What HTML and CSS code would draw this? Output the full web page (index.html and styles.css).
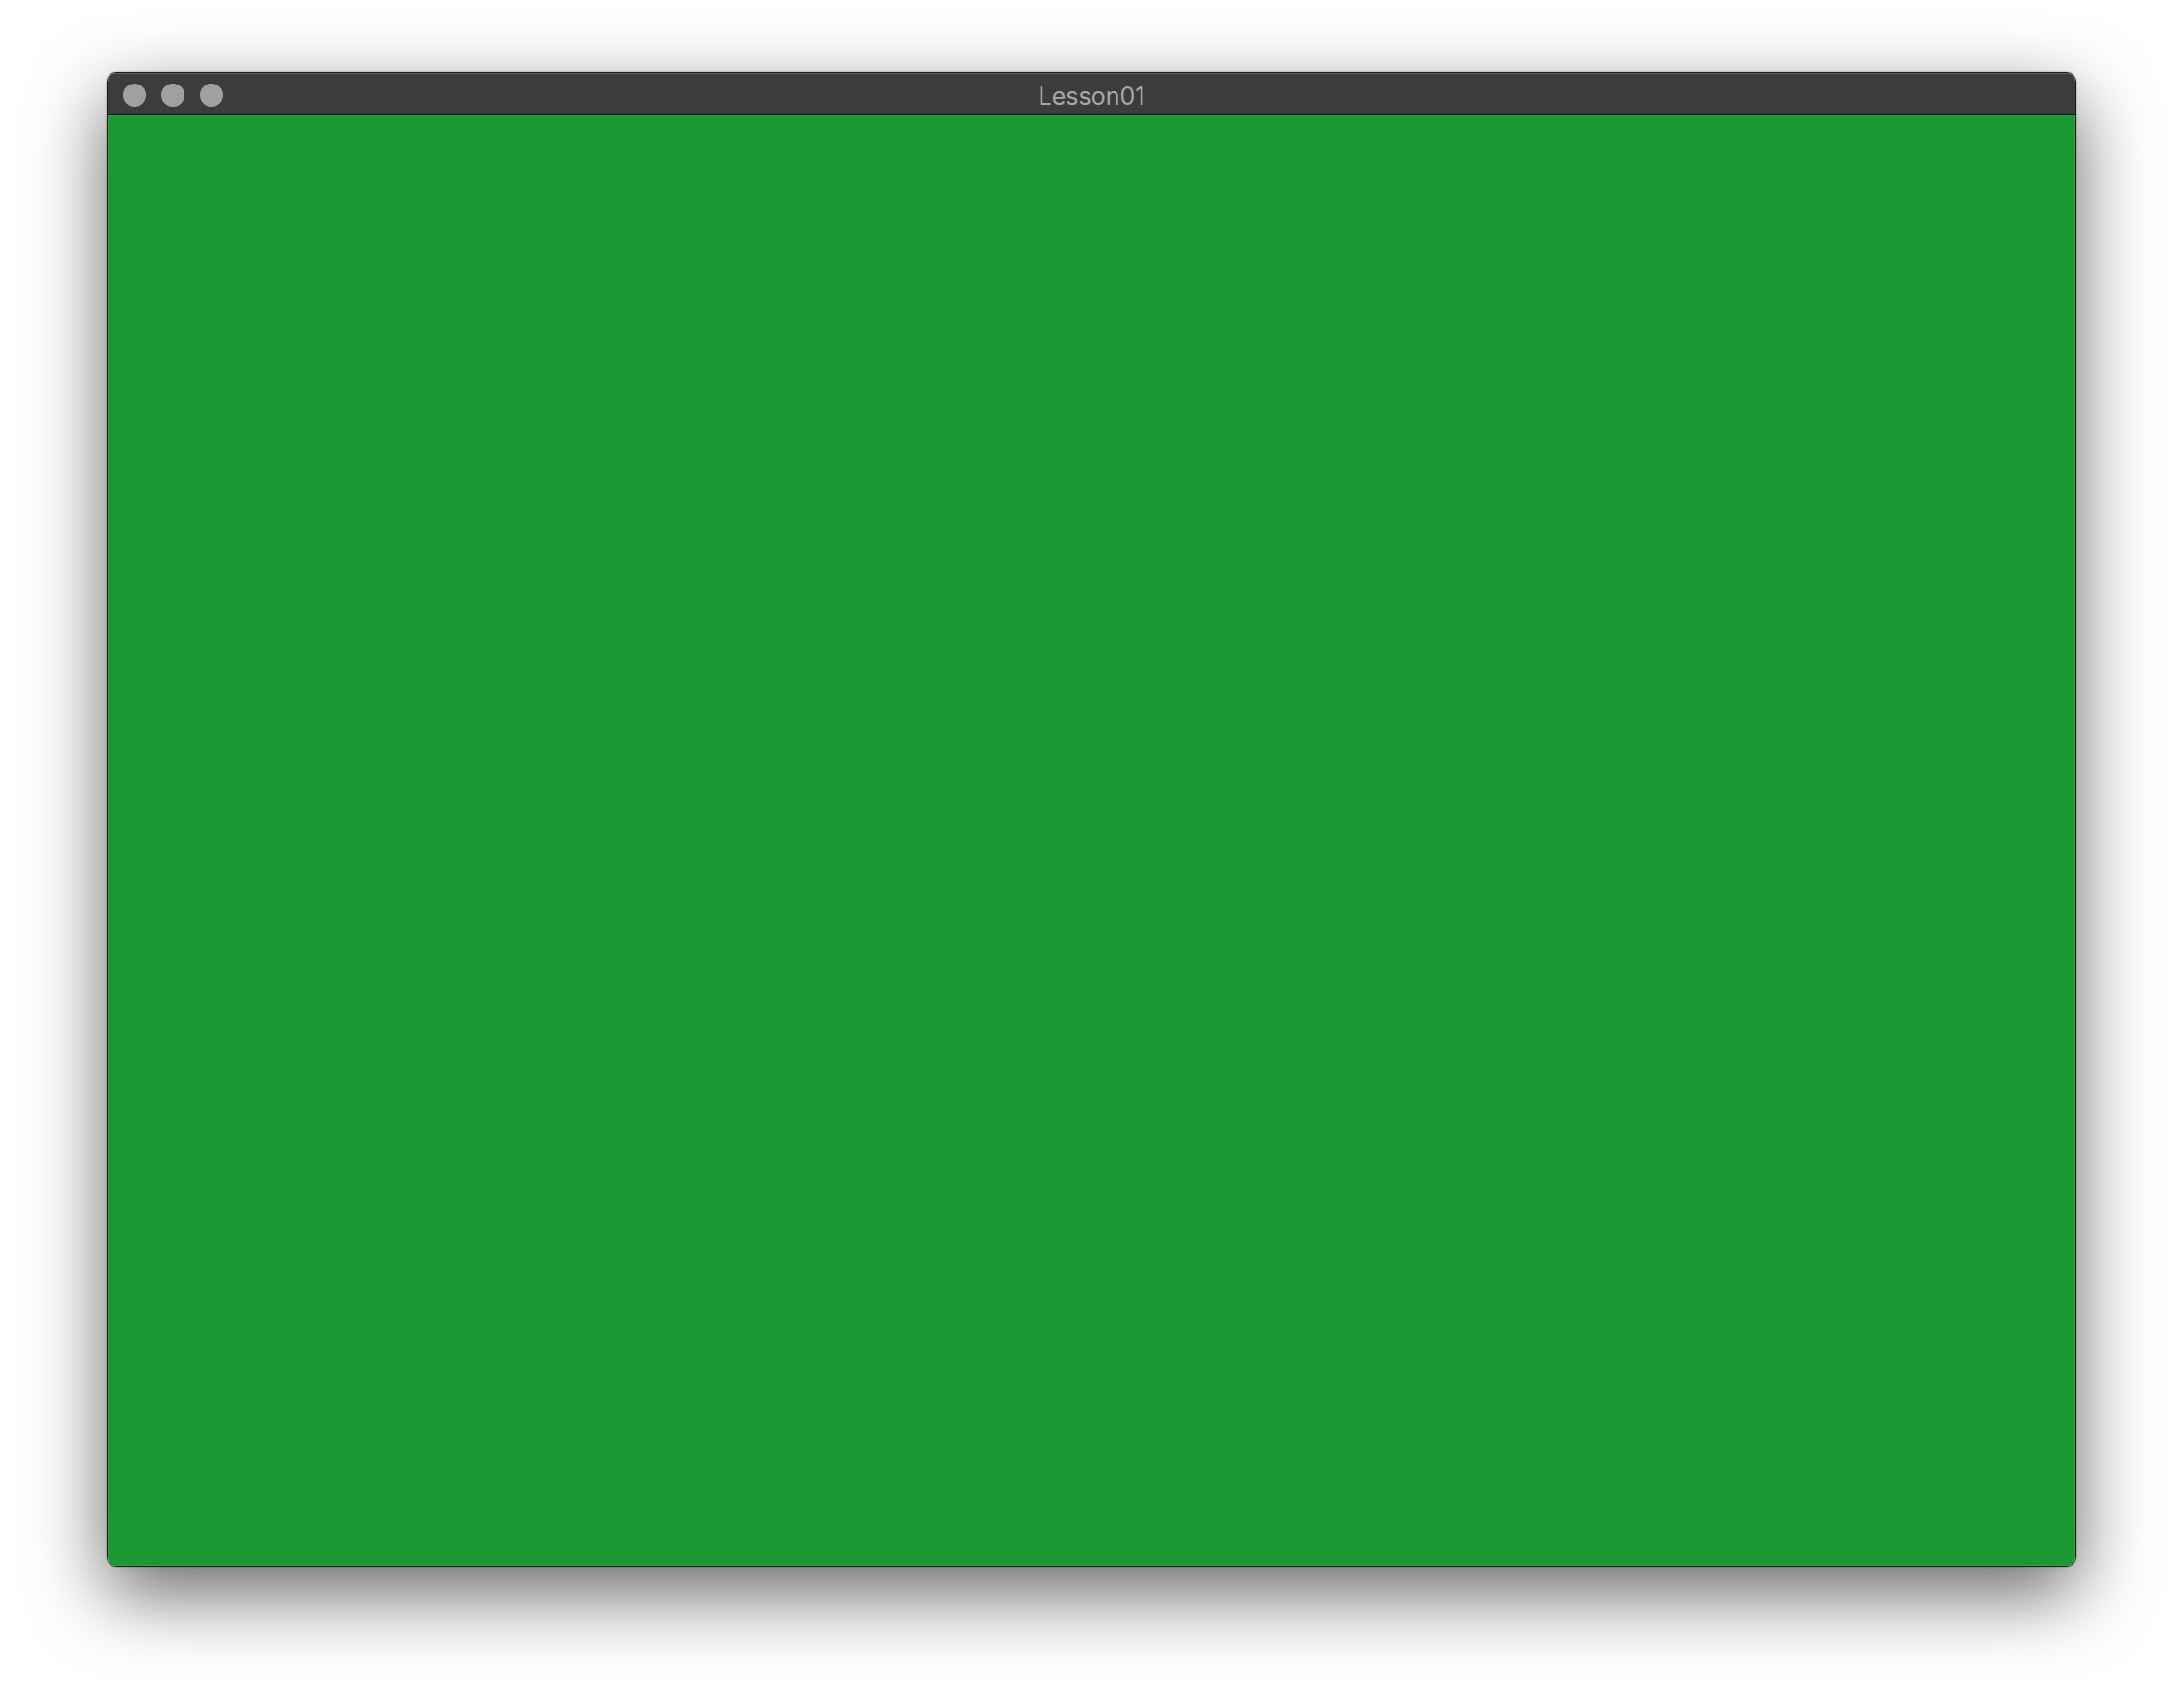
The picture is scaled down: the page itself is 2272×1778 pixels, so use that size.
FILE: index.html
```html
<!DOCTYPE html>
<html>
<head>
<meta charset="utf-8">
<link rel="stylesheet" href="styles.css">
</head>
<body>
<div class="window">
  <div class="titlebar">
    <div class="lights">
      <span class="light"></span>
      <span class="light"></span>
      <span class="light"></span>
    </div>
    <div class="title">Lesson01</div>
  </div>
  <div class="content"></div>
</div>
</body>
</html>
```
FILE: styles.css
```css
html, body {
  margin: 0;
  padding: 0;
  background: #ffffff;
}
body {
  width: 2272px;
  height: 1778px;
  overflow: hidden;
  padding-top: 75px;
  padding-left: 111px;
  box-sizing: border-box;
}
.window {
  width: 2050px;
  height: 1556px;
  box-sizing: border-box;
  border: 1px solid #1a1a1a;
  border-radius: 10px;
  overflow: hidden;
  display: flex;
  flex-direction: column;
  box-shadow: 0 28px 80px rgba(0, 0, 0, 0.6), 0 0 2px rgba(0,0,0,0.4);
}
.titlebar {
  height: 44px;
  flex: none;
  background: #3c3c3c;
  border-top: 1px solid #5e5e5e;
  border-bottom: 1px solid #121212;
  box-sizing: border-box;
  position: relative;
  display: flex;
  align-items: center;
  justify-content: center;
}
.lights {
  position: absolute;
  left: 16px;
  top: 10px;
  display: flex;
  gap: 16px;
}
.light {
  width: 24px;
  height: 24px;
  border-radius: 50%;
  background: #a0a0a0;
}
.title {
  font-family: Inter, "Liberation Sans", sans-serif;
  font-size: 25px;
  color: #a8a8a8;
  line-height: 1;
  padding-top: 4px;
}
.content {
  flex: 1;
  background: #199833;
  box-shadow: inset 0 0 0 1px #2aa544;
}
```
